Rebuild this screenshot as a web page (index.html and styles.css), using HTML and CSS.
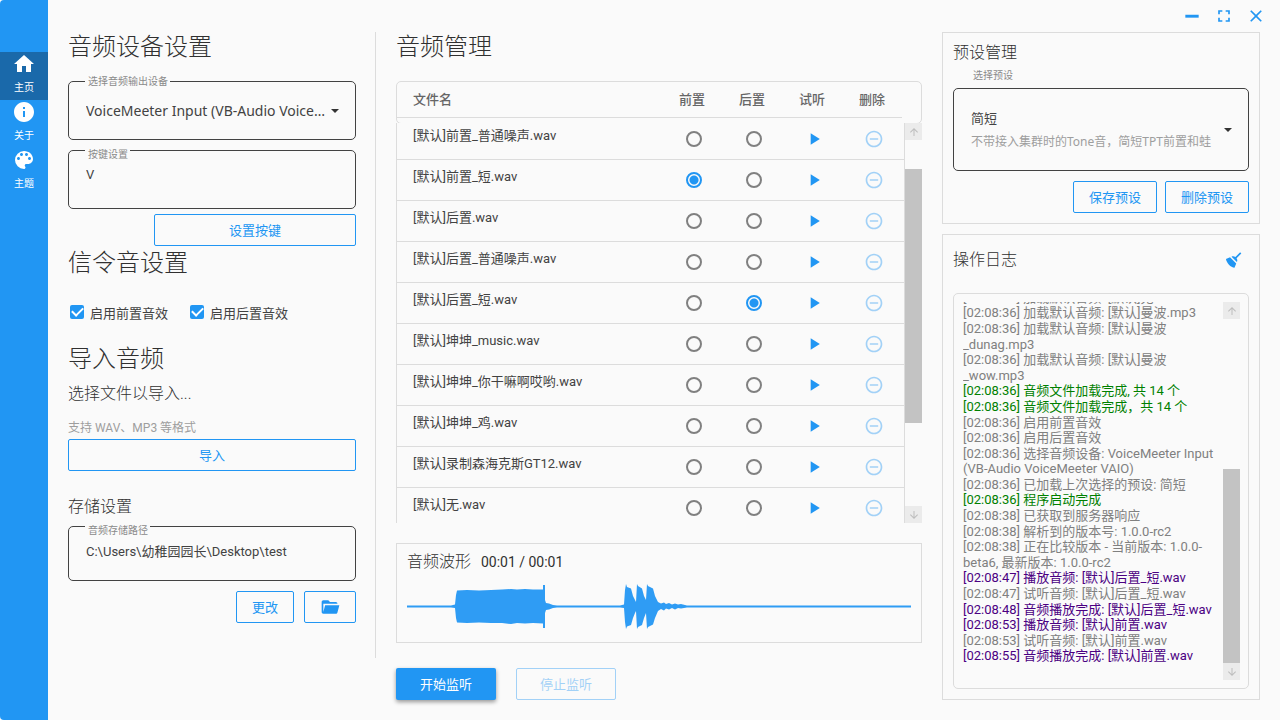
FILE: index.html
```
<!DOCTYPE html>
<html lang="zh-CN">
<head>
    <meta charset="UTF-8">
    <meta name="viewport" content="width=device-width, initial-scale=1.0">
    <title>音频管理</title>
    <link rel="stylesheet" href="styles.css">
</head>
<body>

<div class="app">
    <nav class="sidebar">
        <a href="#" class="nav-item active">
            <svg viewBox="0 0 24 24"><path d="M10 20v-6h4v6h5v-8h3L12 3 2 12h3v8z"/></svg>
            <span>主页</span>
        </a>
        <a href="#" class="nav-item">
            <svg viewBox="0 0 24 24"><path d="M12 2C6.48 2 2 6.48 2 12s4.48 10 10 10 10-4.48 10-10S17.52 2 12 2zm1 15h-2v-6h2v6zm0-8h-2V7h2v2z"/></svg>
            <span>关于</span>
        </a>
        <a href="#" class="nav-item">
            <svg viewBox="0 0 24 24"><path d="M12 3a9 9 0 0 0 0 18c.83 0 1.5-.67 1.5-1.5 0-.39-.15-.74-.39-1.01-.23-.26-.38-.61-.38-.99 0-.83.67-1.5 1.5-1.5H16c2.76 0 5-2.24 5-5 0-4.42-4.03-8-9-8zm-5.5 9c-.83 0-1.5-.67-1.5-1.5S5.67 9 6.5 9 8 9.67 8 10.5 7.33 12 6.5 12zm3-4C8.67 8 8 7.33 8 6.500S8.67 5 9.5 5s1.500.67 1.500 1.500S10.330 8 9.500 8zm5 0c-.83 0-1.500-.67-1.500-1.500S13.670 5 14.500 5s1.500.67 1.500 1.500S15.330 8 14.500 8zm3 4c-.83 0-1.500-.67-1.500-1.500S16.670 9 17.500 9s1.500.67 1.500 1.500-.67 1.500-1.500 1.500z"/></svg>
            <span>主题</span>
        </a>
    </nav>

    <div class="window-buttons">
        <button aria-label="最小化"><svg viewBox="0 0 24 24"><path d="M4 10.500h16v3.500H4z"/></svg></button>
        <button aria-label="最大化"><svg viewBox="0 0 24 24"><path d="M7 14H5v5h5v-2H7v-3zm-2-4h2V7h3V5H5v5zm12 7h-3v2h5v-5h-2v3zM14 5v2h3v3h2V5h-5z"/></svg></button>
        <button aria-label="关闭"><svg viewBox="0 0 24 24"><path d="M19 6.410L17.590 5 12 10.590 6.410 5 5 6.410 10.590 12 5 17.590 6.410 19 12 13.410 17.590 19 19 17.590 13.410 12z"/></svg></button>
    </div>

    <main class="content">
        <section class="settings">
            <h2>音频设备设置</h2>
            <div class="field select-field">
                <label class="field-label on-border" for="device">选择音频输出设备</label>
                <select id="device">
                    <option>VoiceMeeter Input (VB-Audio VoiceMeeter VAIO)</option>
                </select>
            </div>
            <div class="field text-field">
                <label class="field-label" for="hotkey">按键设置</label>
                <input type="text" id="hotkey" value="V">
            </div>
            <button class="btn set-key">设置按键</button>

            <h2 class="signal-title">信令音设置</h2>
            <div class="checks">
                <label><input type="checkbox" checked> 启用前置音效</label>
                <label><input type="checkbox" checked> 启用后置音效</label>
            </div>

            <h2>导入音频</h2>
            <h3>选择文件以导入...</h3>
            <p class="hint">支持 WAV、MP3 等格式</p>
            <button class="btn import">导入</button>

            <h3 class="storage-title">存储设置</h3>
            <div class="field text-field path-field">
                <label class="field-label" for="path">音频存储路径</label>
                <input type="text" id="path" value="C:\Users\幼稚园园长\Desktop\test">
            </div>
            <div class="actions">
                <button class="btn change">更改</button>
                <button class="btn folder" aria-label="打开文件夹"><svg viewBox="0 0 24 24"><path d="M19 20H4c-1.110 0-2-.9-2-2V6c0-1.110.89-2 2-2h6l2 2h7a2 2 0 0 1 2 2H4v10l2.140-8h17.070l-2.280 8.500c-.23.87-1.010 1.500-1.930 1.500z"/></svg></button>
            </div>
        </section>

        <section class="audio">
            <h2>音频管理</h2>
            <div class="file-head">
                <table>
                    <thead>
                        <tr><th>文件名</th><th>前置</th><th>后置</th><th>试听</th><th>删除</th></tr>
                    </thead>
                </table>
            </div>
            <div class="file-body">
                <div class="file-rows">
                    <table>
                        <tbody id="files"></tbody>
                    </table>
                </div>
                <div class="scrollbar">
                    <span class="arrow"><svg viewBox="0 0 24 24"><path d="M4 12l1.410 1.410L11 7.830V20h2V7.830l5.580 5.590L20 12l-8-8-8 8z"/></svg></span>
                    <span class="track"><span class="thumb file-thumb"></span></span>
                    <span class="arrow down"><svg viewBox="0 0 24 24"><path d="M4 12l1.410 1.410L11 7.830V20h2V7.830l5.580 5.590L20 12l-8-8-8 8z"/></svg></span>
                </div>
            </div>

            <div class="wave card">
                <h3>音频波形 <span class="time">00:01 / 00:01</span></h3>
                <svg viewBox="0 0 504 50" preserveAspectRatio="none">
                    <path d="M0 23.500H44L48 22.500L49 13L50 8.500L60 8L72 8.500L84 8L95 7.500L104 7L110 7.500L118 7L126 7.500L136 7.500V3H138V18L139 21L142 21.500L146 23L150 23.500H213L217 22.500L218 8L219 2L220 5L224 6.500L226 14L228 18L229 20L230 2L231 4L235 6.500L237 14L239 18L240 2L241 4L246 6.500L248 14L251 20L254 21.500L257 20.500L259 22L262 21L265 22.500L268 21.500L271 22.500L274 22L280 23.500H504V25.500H280L274 26.500L271 26L268 27.500L265 26L262 27.500L259 26.500L257 28.500L254 27L251 29L248 36L246 42.500L241 45L240 47L239 31L237 36L235 43L231 45L230 47L229 29L228 31L226 36L224 43L220 44.500L219 47L218 40L217 26L213 25.500H150L146 26L142 27.500L139 28L138 31V46H136V41.500L126 41L118 41.500L110 41L104 42L95 41L84 41L72 40.500L60 41L50 40.500L49 36L48 26L44 25.500H0Z"/>
                </svg>
            </div>

            <div class="listen">
                <button class="btn primary">开始监听</button>
                <button class="btn" disabled>停止监听</button>
            </div>
        </section>

        <aside class="side">
            <div class="preset card">
                <h3>预设管理</h3>
                <label class="preset-label" for="preset">选择预设</label>
                <div class="field preset-field">
                    <select id="preset">
                        <option>简短</option>
                    </select>
                    <p>不带接入集群时的Tone音，简短TPT前置和蛙</p>
                </div>
                <div class="actions">
                    <button class="btn">保存预设</button>
                    <button class="btn">删除预设</button>
                </div>
            </div>

            <div class="log card">
                <div class="log-title">
                    <h3>操作日志</h3>
                    <button class="clear" aria-label="清空日志"><svg viewBox="0 0 24 24"><path d="M19.360 2.720L20.780 4.140 15.060 9.850C16.130 11.390 16.280 13.240 15.380 14.440L9.060 8.120C10.260 7.220 12.110 7.370 13.650 8.440L19.360 2.720M5.930 17.570C3.920 15.560 2.690 13.160 2.350 10.920L7.230 8.830L14.670 16.270L12.580 21.150C10.340 20.810 7.940 19.580 5.930 17.570Z"/></svg></button>
                </div>
                <div class="log-box">
                    <div class="log-lines">
                        <p>[02:08:36] 加载默认音频: [默认]无.wav</p>
                        <p>[02:08:36] 加载默认音频: [默认]曼波.mp3</p>
                        <p>[02:08:36] 加载默认音频: [默认]曼波<wbr>_dunag.mp3</p>
                        <p>[02:08:36] 加载默认音频: [默认]曼波<wbr>_wow.mp3</p>
                        <p class="ok">[02:08:36] 音频文件加载完成, 共 14 个</p>
                        <p class="ok">[02:08:36] 音频文件加载完成，共 14 个</p>
                        <p>[02:08:36] 启用前置音效</p>
                        <p>[02:08:36] 启用后置音效</p>
                        <p>[02:08:36] 选择音频设备: VoiceMeeter Input (VB-Audio VoiceMeeter VAIO)</p>
                        <p>[02:08:36] 已加载上次选择的预设: 简短</p>
                        <p class="ok">[02:08:36] 程序启动完成</p>
                        <p>[02:08:38] 已获取到服务器响应</p>
                        <p>[02:08:38] 解析到的版本号: 1.0.0-rc2</p>
                        <p>[02:08:38] 正在比较版本 - 当前版本: 1.0.0-beta6, 最新版本: 1.0.0-rc2</p>
                        <p class="play">[02:08:47] 播放音频: [默认]后置_短.wav</p>
                        <p>[02:08:47] 试听音频: [默认]后置_短.wav</p>
                        <p class="play">[02:08:48] 音频播放完成: [默认]后置_短.wav</p>
                        <p class="play">[02:08:53] 播放音频: [默认]前置.wav</p>
                        <p>[02:08:53] 试听音频: [默认]前置.wav</p>
                        <p class="play">[02:08:55] 音频播放完成: [默认]前置.wav</p>
                    </div>
                    <div class="scrollbar">
                        <span class="arrow"><svg viewBox="0 0 24 24"><path d="M4 12l1.410 1.410L11 7.830V20h2V7.830l5.580 5.590L20 12l-8-8-8 8z"/></svg></span>
                        <span class="track end"><span class="thumb log-thumb"></span></span>
                        <span class="arrow down"><svg viewBox="0 0 24 24"><path d="M4 12l1.410 1.410L11 7.830V20h2V7.830l5.580 5.590L20 12l-8-8-8 8z"/></svg></span>
                    </div>
                </div>
            </div>
        </aside>
    </main>
</div>

<script>
    const files = [
        "前置_普通噪声.wav",
        "前置_短.wav",
        "后置.wav",
        "后置_普通噪声.wav",
        "后置_短.wav",
        "坤坤_music.wav",
        "坤坤_你干嘛啊哎哟.wav",
        "坤坤_鸡.wav",
        "录制森海克斯GT12.wav",
        "无.wav"
    ];
    const selectedFront = 1;
    const selectedBack = 4;

    document.getElementById("files").innerHTML = files.map((name, i) => `
        <tr>
            <td>[默认]${name}</td>
            <td><input type="radio" name="front" aria-label="前置 ${name}" ${i === selectedFront ? "checked" : ""}></td>
            <td><input type="radio" name="back" aria-label="后置 ${name}" ${i === selectedBack ? "checked" : ""}></td>
            <td><button aria-label="试听 ${name}"><svg viewBox="0 0 24 24"><path d="M8 5v14l11-7z"/></svg></button></td>
            <td><button disabled aria-label="删除 ${name}"><svg viewBox="0 0 24 24"><path d="M7 11v2h10v-2H7zm5-9C6.480 2 2 6.480 2 12s4.480 10 10 10 10-4.480 10-10S17.520 2 12 2zm0 18c-4.410 0-8-3.590-8-8s3.590-8 8-8 8 3.590 8 8-3.590 8-8 8z"/></svg></button></td>
        </tr>`).join("");
</script>

</body>
</html>
```
FILE: styles.css
```
* {
    box-sizing: border-box;
}
body {
    margin: 0;
    background: #fafafa;
    color: #424242;
    font-family: Roboto, "Noto Sans CJK SC", sans-serif;
    font-size: 13px;
}
h2, h3, p {
    margin: 0;
}
h2, h3 {
    color: #303030;
    font-weight: 300;
}
h2 {
    font-size: 24px;
    line-height: 30px;
}
h3 {
    font-size: 16px;
    line-height: 20px;
}
button, input, select {
    font-family: inherit;
    font-size: 13px;
    color: inherit;
}
button {
    border: none;
    background: none;
    padding: 0;
    color: #2196f3;
    cursor: pointer;
}
svg {
    display: block;
    fill: currentColor;
}
table {
    width: 100%;
    border-collapse: separate;
    border-spacing: 0;
    table-layout: fixed;
}

.app {
    display: flex;
    height: 100vh;
    min-height: 720px;
}

/* Sidebar */
.sidebar {
    flex: none;
    width: 48px;
    padding-top: 52px;
    background: #2196f3;
    border-radius: 4px 0 0 4px;
}
.nav-item {
    display: flex;
    flex-direction: column;
    align-items: center;
    height: 48px;
    color: white;
    font-size: 10px;
    line-height: 24px;
    text-decoration: none;
}
.nav-item.active {
    background: #1a69aa;
}
.nav-item svg {
    width: 24px;
    height: 24px;
}

.window-buttons {
    position: absolute;
    top: 0;
    right: 8px;
    display: flex;
}
.window-buttons button {
    display: grid;
    place-items: center;
    width: 32px;
    height: 32px;
}
.window-buttons svg {
    width: 20px;
    height: 20px;
}

.content {
    flex: 1;
    min-width: 0;
    display: grid;
    grid-template-columns: 308px minmax(0, 1fr) 318px;
    grid-template-rows: minmax(0, 1fr);
    gap: 20px;
    padding: 32px 20px 20px;
}

/* Shared controls */
.btn {
    height: 32px;
    padding: 0 15px 2px;
    border: 1px solid #2196f3;
    border-radius: 2px;
}
.btn:disabled {
    opacity: 0.4;
}
.btn.primary {
    border: none;
    background: #2196f3;
    color: white;
    box-shadow: 0 2px 4px rgba(0, 0, 0, 0.4);
}
.card {
    border: 1px solid #dcdcdc;
    padding: 10px;
}
.actions {
    display: flex;
    justify-content: flex-end;
    margin-top: 10px;
}
.field {
    position: relative;
    border: 1px solid #424242;
    border-radius: 5px;
}
.field-label {
    position: absolute;
    top: -2px;
    left: 16px;
    padding: 0 2px 0 3px;
    background: #fafafa;
    color: #8a8a8a;
    font-size: 10px;
    line-height: 12px;
}
.field-label.on-border {
    top: -6px;
}
.field select {
    display: block;
    width: 100%;
    appearance: none;
    border: none;
    background: none;
    padding: 0 28px 0 17px;
    font-family: "Noto Sans", "Noto Sans CJK SC", sans-serif;
    text-overflow: ellipsis;
}
.select-field select {
    height: 57px;
    font-size: 14px;
}
.select-field::after, .preset-field::after {
    content: "";
    position: absolute;
    top: 50%;
    right: 16px;
    margin-top: -2px;
    border: 4px solid transparent;
    border-top-color: #333;
    border-bottom: none;
}
.text-field {
    height: 59px;
    margin-top: 10px;
}
.field input {
    display: block;
    width: 100%;
    height: 30px;
    margin-top: 8px;
    padding: 0 17px;
    border: none;
    background: none;
}

/* Left column */
.settings {
    display: flex;
    flex-direction: column;
    margin-bottom: 42px;
    padding-right: 19px;
    border-right: 1px solid #dcdcdc;
}
.select-field {
    margin-top: 19px;
}
.set-key {
    align-self: flex-end;
    width: 202px;
    margin-top: 5px;
}
.signal-title {
    margin-top: 2px;
}
.checks {
    display: flex;
    gap: 22px;
    height: 28px;
    margin: 20px 0 18px;
    padding-left: 2px;
}
.checks label {
    display: flex;
    align-items: center;
    gap: 6px;
}
input[type="checkbox"] {
    appearance: none;
    width: 14px;
    height: 14px;
    margin: 0;
    border-radius: 2px;
    background: #2196f3;
    display: grid;
    place-items: center;
}
input[type="checkbox"]::after {
    content: "";
    width: 9px;
    height: 5px;
    margin-top: -3px;
    border: solid white;
    border-width: 0 0 2px 2px;
    transform: rotate(-45deg);
}
.settings h3 {
    margin-top: 10px;
}
.hint {
    margin: 16px 0 3px;
    color: #9e9e9e;
    font-size: 12px;
    line-height: 16px;
}
.settings .storage-title {
    margin-top: 26px;
}
.path-field {
    height: 55px;
    margin-top: 9px;
}
.settings .actions {
    gap: 10px;
}
.change {
    width: 58px;
}
.folder {
    width: 52px;
    padding-bottom: 0;
}
.folder svg {
    width: 20px;
    height: 20px;
}

/* File list */
.audio {
    display: flex;
    flex-direction: column;
}
.file-head {
    flex: none;
    height: 43px;
    margin-top: 19px;
    padding-right: 19px;
    border: 1px solid #dcdcdc;
    border-radius: 5px;
}
th {
    height: 36px;
    padding: 0 0 2px;
    border-bottom: 1px solid #dcdcdc;
    color: #666;
    font-weight: 500;
}
th, td {
    width: 60px;
    text-align: center;
}
th:first-child, td:first-child {
    width: auto;
    padding-left: 16px;
    text-align: left;
}
.file-body {
    display: flex;
    flex: 1;
    min-height: 0;
    position: relative;
    margin-top: -1px;
}
.file-rows {
    flex: 1;
    overflow: hidden;
    border: solid #dcdcdc;
    border-width: 0 1px;
    background: #fafafa;
}
.file-rows table {
    margin-top: -4px;
}
td {
    height: 41px;
    padding: 0;
    border-bottom: 1px solid #dcdcdc;
}
td:first-child {
    padding-bottom: 10px;
}
td input, td button, td svg {
    display: block;
    margin: 0 auto;
}
td svg {
    width: 20px;
    height: 20px;
}
td button:disabled {
    opacity: 0.4;
}
input[type="radio"] {
    appearance: none;
    width: 16px;
    height: 16px;
    border: 2px solid #808080;
    border-radius: 50%;
}
input[type="radio"]:checked {
    border-color: #2196f3;
    background: radial-gradient(circle, #2196f3 4px, transparent 5px);
}

.scrollbar {
    flex: none;
    display: flex;
    flex-direction: column;
    width: 17px;
}
.arrow {
    display: grid;
    place-items: center;
    height: 17px;
    background: #ebebeb;
    color: #bdbdbd;
}
.arrow svg {
    width: 12px;
    height: 12px;
}
.arrow.down svg {
    transform: rotate(180deg);
}
.track {
    display: flex;
    flex-direction: column;
    flex: 1;
}
.track.end {
    justify-content: flex-end;
}
.thumb {
    background: #c3c3c3;
}
.file-thumb {
    height: 254px;
    margin-top: 29px;
}
.log-thumb {
    height: 194px;
}

.wave {
    margin-top: 20px;
    height: 100px;
    padding-top: 8px;
}
.time {
    margin-left: 6px;
    font-size: 14px;
    font-weight: 400;
}
.wave svg {
    width: 100%;
    height: 50px;
    margin-top: 10px;
    fill: #2f9cf4;
}
.listen {
    display: flex;
    gap: 20px;
    margin-top: 25px;
}
.listen .btn {
    width: 100px;
}

/* Right column */
.side {
    display: flex;
    flex-direction: column;
    gap: 10px;
}
.preset-label {
    display: block;
    padding: 7px 20px 6px;
    color: #8a8a8a;
    font-size: 10px;
    line-height: 12px;
}
.preset-field {
    height: 83px;
    padding-top: 18px;
}
.preset-field select {
    height: 22px;
}
.preset-field p {
    margin: 4px 17px 0;
    color: #9e9e9e;
    font-family: "Noto Sans", "Noto Sans CJK SC", sans-serif;
    font-size: 12px;
    line-height: 18px;
    white-space: nowrap;
}
.preset .actions {
    gap: 8px;
}
.log {
    display: flex;
    flex-direction: column;
    flex: 1;
    min-height: 0;
}
.log-title {
    display: flex;
    align-items: center;
    justify-content: space-between;
    height: 30px;
    margin-bottom: 18px;
}
.clear {
    margin-right: 5px;
}
.clear svg {
    width: 20px;
    height: 20px;
}
.log-box {
    display: flex;
    flex: 1;
    min-height: 0;
    padding: 8px 8px 8px 9px;
    border: 1px solid #dcdcdc;
    border-radius: 5px;
}
.log-lines {
    flex: 1;
    display: flex;
    flex-direction: column;
    justify-content: flex-end;
    overflow: hidden;
    padding-bottom: 16px;
    color: #808080;
    line-height: 1.2;
}
.log-lines p {
    flex: none;
}
.log-lines .ok {
    color: green;
}
.log-lines .play {
    color: indigo;
}
```
